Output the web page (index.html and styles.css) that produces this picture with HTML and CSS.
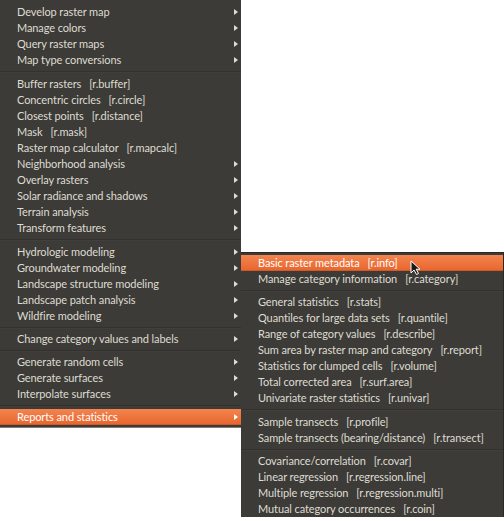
FILE: index.html
```html
<html>

<head>
    <title>Raster menu</title>
    <link rel="stylesheet" href="styles.css">
</head>

<body>
    <div class="desktop">
        <ul class="menu menu-main">
            <li class="item has-sub"><span class="label">Develop raster map</span></li>
            <li class="item has-sub"><span class="label">Manage colors</span></li>
            <li class="item has-sub"><span class="label">Query raster maps</span></li>
            <li class="item has-sub"><span class="label">Map type conversions</span></li>
            <li class="separator tall"></li>
            <li class="item"><span class="label">Buffer rasters</span><span class="cmd">[r.buffer]</span></li>
            <li class="item"><span class="label">Concentric circles</span><span class="cmd">[r.circle]</span></li>
            <li class="item"><span class="label">Closest points</span><span class="cmd">[r.distance]</span></li>
            <li class="item"><span class="label">Mask</span><span class="cmd">[r.mask]</span></li>
            <li class="item"><span class="label">Raster map calculator</span><span class="cmd">[r.mapcalc]</span></li>
            <li class="item has-sub"><span class="label">Neighborhood analysis</span></li>
            <li class="item has-sub"><span class="label">Overlay rasters</span></li>
            <li class="item has-sub"><span class="label">Solar radiance and shadows</span></li>
            <li class="item has-sub"><span class="label">Terrain analysis</span></li>
            <li class="item has-sub"><span class="label">Transform features</span></li>
            <li class="separator tall"></li>
            <li class="item has-sub"><span class="label">Hydrologic modeling</span></li>
            <li class="item has-sub"><span class="label">Groundwater modeling</span></li>
            <li class="item has-sub"><span class="label">Landscape structure modeling</span></li>
            <li class="item has-sub"><span class="label">Landscape patch analysis</span></li>
            <li class="item has-sub"><span class="label">Wildfire modeling</span></li>
            <li class="separator"></li>
            <li class="item has-sub"><span class="label">Change category values and labels</span></li>
            <li class="separator"></li>
            <li class="item has-sub"><span class="label">Generate random cells</span></li>
            <li class="item has-sub"><span class="label">Generate surfaces</span></li>
            <li class="item has-sub"><span class="label">Interpolate surfaces</span></li>
            <li class="separator"></li>
            <li class="item has-sub active"><span class="label">Reports and statistics</span></li>
        </ul>

        <ul class="menu menu-sub">
            <li class="item active"><span class="label">Basic raster metadata</span><span class="cmd">[r.info]</span></li>
            <li class="item"><span class="label">Manage category information</span><span class="cmd">[r.category]</span></li>
            <li class="separator"></li>
            <li class="item"><span class="label">General statistics</span><span class="cmd">[r.stats]</span></li>
            <li class="item"><span class="label">Quantiles for large data sets</span><span class="cmd">[r.quantile]</span></li>
            <li class="item"><span class="label">Range of category values</span><span class="cmd">[r.describe]</span></li>
            <li class="item"><span class="label">Sum area by raster map and category</span><span class="cmd">[r.report]</span></li>
            <li class="item"><span class="label">Statistics for clumped cells</span><span class="cmd">[r.volume]</span></li>
            <li class="item"><span class="label">Total corrected area</span><span class="cmd">[r.surf.area]</span></li>
            <li class="item"><span class="label">Univariate raster statistics</span><span class="cmd">[r.univar]</span></li>
            <li class="separator tall"></li>
            <li class="item"><span class="label">Sample transects</span><span class="cmd">[r.profile]</span></li>
            <li class="item"><span class="label">Sample transects (bearing/distance)</span><span class="cmd">[r.transect]</span></li>
            <li class="separator"></li>
            <li class="item"><span class="label">Covariance/correlation</span><span class="cmd">[r.covar]</span></li>
            <li class="item"><span class="label">Linear regression</span><span class="cmd">[r.regression.line]</span></li>
            <li class="item"><span class="label">Multiple regression</span><span class="cmd">[r.regression.multi]</span></li>
            <li class="item"><span class="label">Mutual category occurrences</span><span class="cmd">[r.coin]</span></li>
        </ul>

        <svg class="cursor" width="12" height="16" viewBox="0 0 12 16">
            <path d="M1 1 L1 13 L4 10 L6.5 14.5 L8.5 13.5 L6.2 9.2 L10 9.2 Z" fill="#1a1a1a" stroke="#ffffff" stroke-width="1" stroke-linejoin="round"/>
        </svg>
    </div>
</body>

</html>
```

FILE: styles.css
```css
html,
body {
    margin: 0;
    background: #ffffff;
    overflow: hidden;
}

.desktop {
    position: relative;
    width: 504px;
    height: 521px;
    overflow: hidden;
    font-family: Lato, "Noto Sans", sans-serif;
    font-size: 11px;
    letter-spacing: -0.1px;
}

.menu {
    list-style: none;
    margin: 0;
    background: #3c3b37;
    color: #dfdbd2;
}

.menu-main {
    width: 241px;
    padding: 4px 0 2px;
    border-bottom: 1px solid #7d7c77;
}

/* submenu pops up over the main menu */
.menu-sub {
    position: absolute;
    left: 241px;
    top: 252px;
    width: 262px;
    padding: 2px 0 0;
    border-top: 1px solid #2a2926;
    border-right: 1px solid #2a2926;
}

.item {
    display: flex;
    align-items: center;
    height: 16px;
    line-height: 16px;
    padding: 0 3px 0 17px;
    white-space: nowrap;
}

.cmd {
    margin-left: 8px;
}

.has-sub::after {
    content: "";
    margin-left: auto;
    border-left: 4px solid #dfdbd2;
    border-top: 3px solid transparent;
    border-bottom: 3px solid transparent;
}

.active {
    background: linear-gradient(#f3844f, #e8652c);
    box-shadow: inset 0 -1px #cf5a26;
    color: #ffffff;
}

.active.has-sub::after {
    border-left-color: #ffffff;
}

.separator {
    height: 7px;
    background: linear-gradient(transparent 3px, #32312d 3px, #32312d 4px, #413f3b 4px, #413f3b 5px, transparent 5px);
}

.separator.tall {
    height: 8px;
}

.cursor {
    position: absolute;
    left: 410px;
    top: 260px;
}
```
